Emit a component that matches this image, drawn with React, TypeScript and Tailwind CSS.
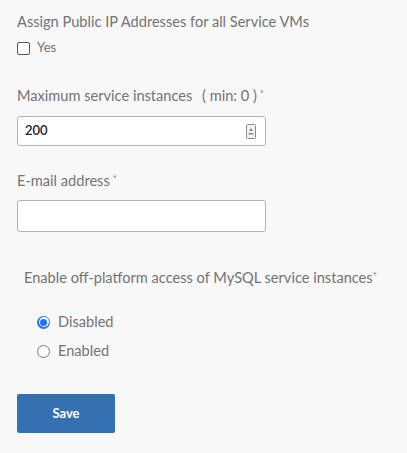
import React from 'react';

const font = { fontFamily: 'Lato, "Open Sans", sans-serif' };

function Radio({ checked }: { checked: boolean }) {
  if (checked) {
    return (
      <span className="flex h-[13px] w-[13px] items-center justify-center rounded-full bg-[#1b76f0]">
        <span className="flex h-[10px] w-[10px] items-center justify-center rounded-full bg-white">
          <span className="h-[7px] w-[7px] rounded-full bg-[#1b76f0]" />
        </span>
      </span>
    );
  }
  return <span className="h-[13px] w-[13px] rounded-full border border-[#777] bg-white" />;
}

function Required() {
  return <span className="relative -top-[4px] ml-[3px] text-[10px] text-[#e2554f]">*</span>;
}

export default function App() {
  return (
    <div className="min-h-[453px] w-[407px] bg-[#f8f8f8] px-[17px] pt-[13px] text-[#737373]" style={font}>
      <div className="h-[18px] text-[14.6px] leading-[18px]">Assign Public IP Addresses for all Service VMs</div>
      <label className="mt-[9px] flex h-[16px] items-center gap-[7px]">
        <span className="h-[13px] w-[13px] rounded-[2px] border border-[#555] bg-white" />
        <span className="text-[13px]">Yes</span>
      </label>

      <div className="mt-[31px] h-[18px] text-[14.6px] leading-[18px]">
        Maximum service instances <span className="ml-[6px]">( min: 0 )</span>
        <Required />
      </div>
      <div className="mt-[11px] flex h-[30px] w-[249px] items-center justify-between rounded-[3px] border border-[#b3b3b3] bg-white pl-[7px] pr-[8px]">
        <span className="text-[13px] font-semibold text-[#222]">200</span>
        <svg width="10" height="15" viewBox="0 0 10 15" className="mr-[1px]">
          <rect x="0.5" y="0.5" width="9" height="14" rx="1" fill="#f2f2f2" stroke="#8a8a8a" />
          <path d="M5 4 L7 7 L3 7 Z" fill="#8a8a8a" />
          <rect x="2.5" y="9" width="5" height="1.5" fill="#8a8a8a" />
        </svg>
      </div>

      <div className="mt-[26px] h-[18px] text-[14.6px] leading-[18px]">
        E-mail address
        <Required />
      </div>
      <div className="mt-[10px] h-[32px] w-[249px] rounded-[3px] border border-[#b3b3b3] bg-white" />

      <div className="mt-[36px] h-[20px] pl-[7px] text-[14.6px] leading-[20px]">
        Enable off-platform access of MySQL service instances
        <span className="relative -top-[4px] text-[10px] text-[#e2554f]">*</span>
      </div>
      <div className="pl-[20px]">
        <label className="mt-[24px] flex h-[20px] items-center gap-[8px]">
          <Radio checked />
          <span className="text-[14.6px]">Disabled</span>
        </label>
        <label className="mt-[9px] flex h-[20px] items-center gap-[8px]">
          <Radio checked={false} />
          <span className="text-[14.6px]">Enabled</span>
        </label>
      </div>

      <button className="mt-[33px] flex h-[39px] w-[98px] items-center justify-center rounded-[2px] bg-[#3571b0] text-[13px] font-bold text-white">
        Save
      </button>
    </div>
  );
}
